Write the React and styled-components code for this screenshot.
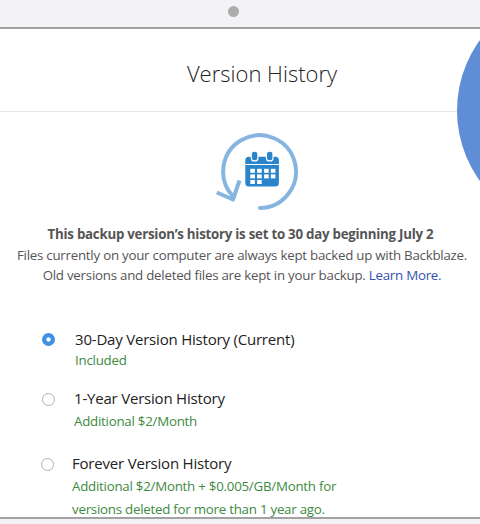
import React from 'react';
import styled, { createGlobalStyle } from 'styled-components';

const GlobalStyle = createGlobalStyle`
    * {
        box-sizing: border-box;
    }

    body {
        margin: 0;
        background: #f3f3f5;
        font-family: 'Open Sans', 'Noto Sans', sans-serif;
    }
`;

const Page = styled.div`
    position: relative;
    width: 480px;
    height: 524px;
    overflow: hidden;
`;

const TopBar = styled.div`
    display: flex;
    justify-content: center;
    height: 27px;
    padding: 6px 14px 0 0;
`;

const Camera = styled.div`
    width: 11px;
    height: 11px;
    border-radius: 50%;
    background: #adadad;
`;

const Panel = styled.main`
    height: 492px;
    overflow: hidden;
    border-top: 2px solid #a0a0a0;
    border-bottom: 2px solid #a3a3a5;
    background: #fff;
`;

const Header = styled.header`
    display: flex;
    justify-content: center;
    height: 83px;
    padding: 28px 0 0 44px;
    border-bottom: 1px solid #e6e6e6;
`;

const Title = styled.h1`
    margin: 0;
    color: #222;
    font-size: 22px;
    font-weight: 300;
    line-height: 32px;
    white-space: nowrap;
`;

const Bubble = styled.div`
    position: absolute;
    top: -9px;
    left: 457px;
    width: 239px;
    height: 239px;
    border-radius: 50%;
    background: #5f8dd6;
    clip-path: inset(38px 0 0 0);
`;

const HistoryIcon = styled.svg`
    display: block;
    width: 90px;
    height: 84px;
    margin: 18px 0 0 212px;
`;

const Summary = styled.div`
    display: flex;
    flex-direction: column;
    align-items: center;
    padding: 10px 0 0 4px;
`;

const SummaryLine = styled.div`
    height: 20.5px;
    margin-right: ${({ $bold }) => ($bold ? 3 : 0)}px;
    color: #555;
    font-size: 13.3px;
    font-weight: ${({ $bold }) => ($bold ? 700 : 400)};
    letter-spacing: ${({ $bold }) => ($bold ? -0.25 : -0.24)}px;
    line-height: 20.5px;
    white-space: nowrap;
`;

const Link = styled.a`
    color: #3450b0;
    text-decoration: none;
`;

const Options = styled.div`
    padding-top: 42px;
`;

const Option = styled.label`
    display: grid;
    grid-template-columns: auto 1fr;
    column-gap: ${({ $gap }) => $gap}px;
    height: ${({ $height }) => $height}px;
    padding-left: ${({ $left }) => $left}px;
`;

const Radio = styled.span`
    width: 13px;
    height: 13px;
    margin-top: ${({ $checked }) => ($checked ? 5 : 6)}px;
    border: ${({ $checked }) => ($checked ? 'none' : '1px solid #b0b0b0')};
    border-radius: 50%;
    background: ${({ $checked }) => ($checked ? 'radial-gradient(circle, #fff 1.7px, #3f8fe3 2.6px)' : '#fff')};
`;

const OptionName = styled.div`
    color: #222;
    font-size: 15px;
    letter-spacing: -0.2px;
    line-height: 22px;
    white-space: nowrap;
`;

const Price = styled.div`
    color: #3d8a42;
    font-size: 13.3px;
    letter-spacing: -0.24px;
    line-height: 22px;
    white-space: nowrap;

    &:nth-child(2) {
        margin-top: ${({ $shift }) => $shift || 0}px;
    }

    &:nth-child(3) {
        margin-top: 1px;
    }
`;

const dates = [
    [38.3, 38.8], [45.1, 38.8], [52.1, 38.8], [58.8, 38.8],
    [38.3, 44.4], [45.1, 44.4], [52.1, 44.4], [58.8, 44.4],
    [38.3, 50], [45.1, 50],
];

const options = [
    {
        name: '30-Day Version History (Current)',
        price: ['Included'],
        checked: true,
        left: 42,
        gap: 20,
        height: 59,
        shift: -1,
    },
    {
        name: '1-Year Version History',
        price: ['Additional $2/Month'],
        left: 42,
        gap: 19,
        height: 65,
        shift: 1,
    },
    {
        name: 'Forever Version History',
        price: ['Additional $2/Month + $0.005/GB/Month for', 'versions deleted for more than 1 year ago.'],
        left: 41,
        gap: 18,
        height: 70,
        shift: 1,
    },
];

function VersionHistoryIcon() {
    return (
        <HistoryIcon viewBox="0 0 90 84" aria-hidden="true">
            <g fill="none" stroke="#86b6e0" strokeWidth="4" strokeLinejoin="round">
                <path d="M48 78A36.4 36.4 0 1 0 21.5 67" strokeLinecap="round" />
                <path d="M4.8 62.5L21 69.5L27.5 50.5" />
            </g>
            <rect x="33.3" y="26.7" width="33.6" height="29.7" rx="3.5" fill="#2a84ca" />
            <path d="M33.3 34.5H66.9" stroke="#fff" strokeWidth="1.2" />
            <g fill="#2a84ca" stroke="#fff" strokeWidth="2.4" paintOrder="stroke">
                <rect x="39.9" y="21.7" width="5.4" height="8.6" rx="2.4" />
                <rect x="55" y="21.7" width="5.4" height="8.6" rx="2.4" />
            </g>
            {dates.map(([x, y]) => (
                <rect key={`${x}-${y}`} x={x} y={y} width="4.6" height="4" fill="#fff" />
            ))}
        </HistoryIcon>
    );
}

export default function App() {
    return (
        <React.Fragment>
            <GlobalStyle />
            <Page>
                <TopBar>
                    <Camera />
                </TopBar>
                <Panel>
                    <Header>
                        <Title>Version History</Title>
                    </Header>
                    <VersionHistoryIcon />
                    <Summary>
                        <SummaryLine $bold>
                            This backup version’s history is set to 30 day beginning July 2
                        </SummaryLine>
                        <SummaryLine>
                            Files currently on your computer are always kept backed up with Backblaze.
                        </SummaryLine>
                        <SummaryLine>
                            Old versions and deleted files are kept in your backup. <Link>Learn More.</Link>
                        </SummaryLine>
                    </Summary>
                    <Options>
                        {options.map(({ name, price, checked, left, gap, height, shift }) => (
                            <Option key={name} $left={left} $gap={gap} $height={height}>
                                <Radio $checked={checked} />
                                <div>
                                    <OptionName>{name}</OptionName>
                                    {price.map((line) => (
                                        <Price key={line} $shift={shift}>
                                            {line}
                                        </Price>
                                    ))}
                                </div>
                            </Option>
                        ))}
                    </Options>
                </Panel>
                <Bubble />
            </Page>
        </React.Fragment>
    );
}
